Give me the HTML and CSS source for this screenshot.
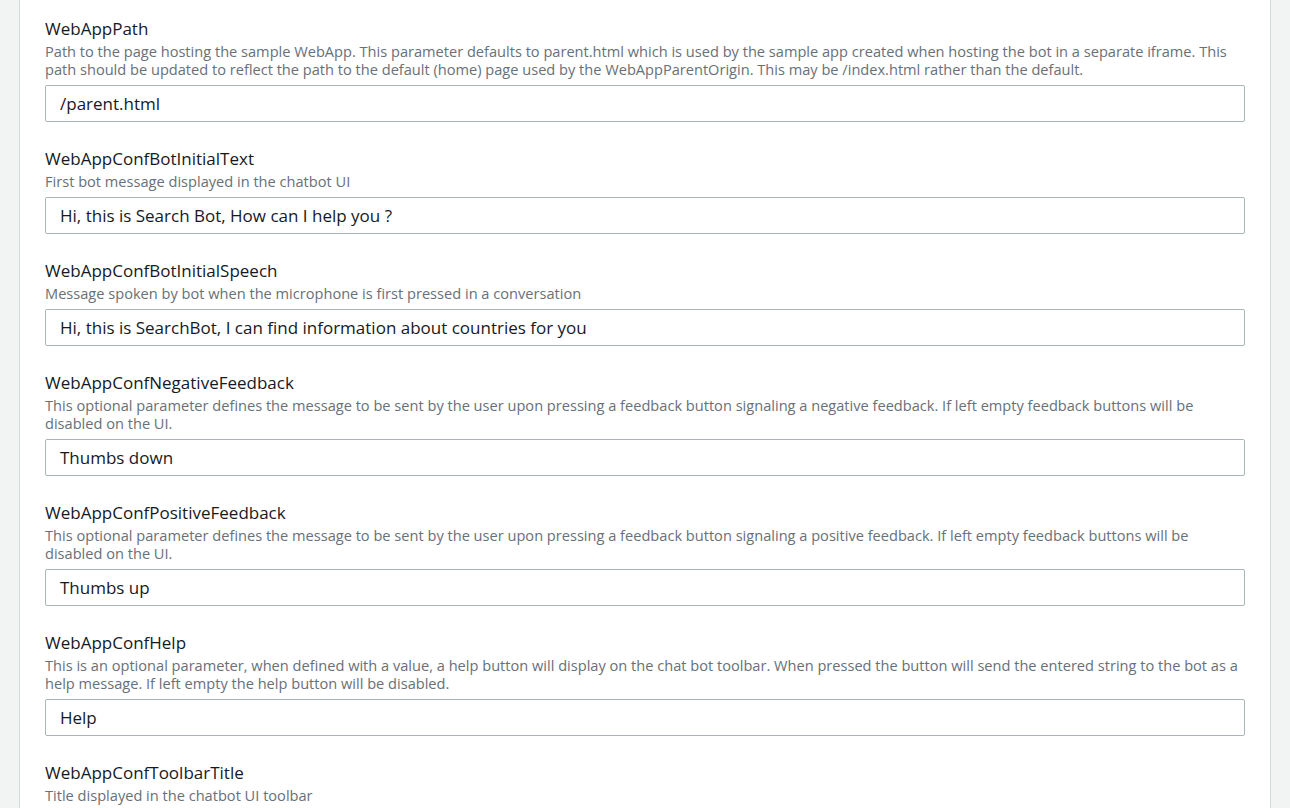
FILE: index.html
```html
<!DOCTYPE html>
<html lang="en">
<head>
<meta charset="utf-8">
<title>Parameters</title>
<link rel="stylesheet" href="styles.css">
</head>
<body>
<div class="page">
  <div class="panel">
    <div class="field">
      <div class="label">WebAppPath</div>
      <div class="desc">Path to the page hosting the sample WebApp. This parameter defaults to parent.html which is used by the sample app created when hosting the bot in a separate iframe. This path should be updated to reflect the path to the default (home) page used by the WebAppParentOrigin. This may be /index.html rather than the default.</div>
      <div class="input">/parent.html</div>
    </div>
    <div class="field">
      <div class="label">WebAppConfBotInitialText</div>
      <div class="desc">First bot message displayed in the chatbot UI</div>
      <div class="input">Hi, this is Search Bot, How can I help you ?</div>
    </div>
    <div class="field">
      <div class="label">WebAppConfBotInitialSpeech</div>
      <div class="desc">Message spoken by bot when the microphone is first pressed in a conversation</div>
      <div class="input">Hi, this is SearchBot, I can find information about countries for you</div>
    </div>
    <div class="field">
      <div class="label">WebAppConfNegativeFeedback</div>
      <div class="desc">This optional parameter defines the message to be sent by the user upon pressing a feedback button signaling a negative feedback. If left empty feedback buttons will be disabled on the UI.</div>
      <div class="input">Thumbs down</div>
    </div>
    <div class="field">
      <div class="label">WebAppConfPositiveFeedback</div>
      <div class="desc">This optional parameter defines the message to be sent by the user upon pressing a feedback button signaling a positive feedback. If left empty feedback buttons will be disabled on the UI.</div>
      <div class="input">Thumbs up</div>
    </div>
    <div class="field">
      <div class="label">WebAppConfHelp</div>
      <div class="desc">This is an optional parameter, when defined with a value, a help button will display on the chat bot toolbar. When pressed the button will send the entered string to the bot as a help message. If left empty the help button will be disabled.</div>
      <div class="input">Help</div>
    </div>
    <div class="field">
      <div class="label">WebAppConfToolbarTitle</div>
      <div class="desc">Title displayed in the chatbot UI toolbar</div>
      <div class="input"></div>
    </div>
  </div>
</div>
</body>
</html>
```
FILE: styles.css
```css
html, body {
  margin: 0;
  padding: 0;
  height: 100%;
  overflow: hidden;
  background: #f2f3f3;
}
body {
  font-family: "Open Sans", "Noto Sans", sans-serif;
  color: #16191f;
}
.page {
  padding-left: 19px;
  width: 1252px;
}
.panel {
  background: #ffffff;
  border-left: 1px solid #d5dbdb;
  border-right: 1px solid #d5dbdb;
  padding: 18px 25px 0 25px;
  min-height: 808px;
  box-sizing: border-box;
}
.field {
  margin-bottom: 26px;
}
.field-tight {
  margin-bottom: 25px;
}
.label {
  font-size: 17px;
  line-height: 22px;
  color: #16191f;
}
.desc {
  margin-top: 2px;
  font-size: 14.6px;
  line-height: 18px;
  color: #687078;
}
.input {
  margin-top: 7px;
  height: 37px;
  box-sizing: border-box;
  border: 1px solid #aab7b8;
  border-radius: 2px;
  padding: 0 14px;
  font-size: 17px;
  line-height: 35px;
  color: #16191f;
}
```
